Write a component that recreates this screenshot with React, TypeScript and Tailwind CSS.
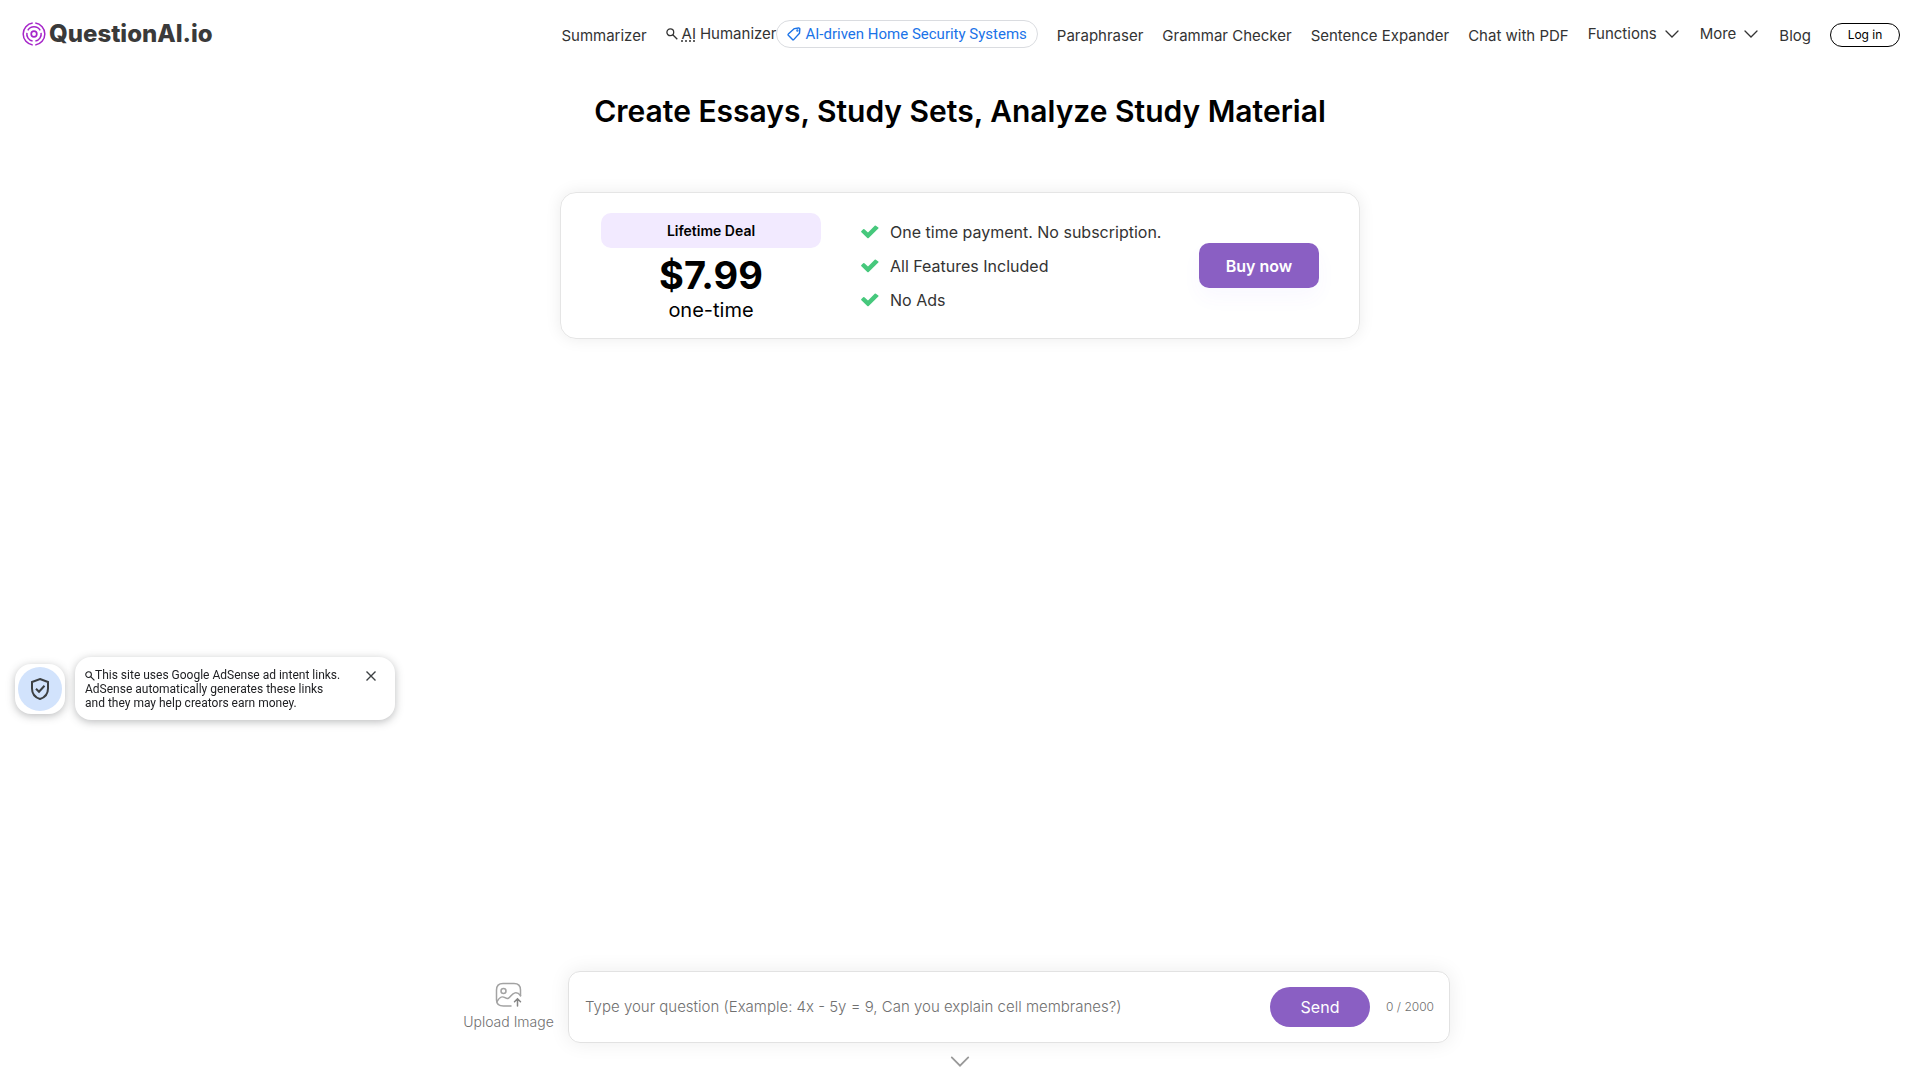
import { useState } from "react";

const perks = ["One time payment. No subscription.", "All Features Included", "No Ads"];

function LogoMark() {
  return (
    <svg width="24" height="24" viewBox="0 0 24 24" fill="none" stroke="#a626c9" strokeWidth="1.5" aria-hidden="true">
      <circle cx="12" cy="12" r="2.8" strokeWidth="1.7" />
      <path d="M5.8 8.4A7.200 7.200 0 0 1 18.200 8.400M4.900 10.800a7.200 7.200 0 0 0 5.700 8.300M19.100 10.800a7.200 7.200 0 0 1-5.700 8.300" />
      <path d="M10.7 1.100A11 11 0 0 0 10.700 22.900M13.300 1.100A11 11 0 0 1 13.300 22.900" />
    </svg>
  );
}

function SearchIcon({ size }: { size: number }) {
  return (
    <svg width={size} height={size} viewBox="0 0 12 12" fill="none" stroke="currentColor" strokeWidth="1.3" className="inline shrink-0" aria-hidden="true">
      <circle cx="4.3" cy="4.3" r="3.4" />
      <path d="m6.8 6.8 4.500 4.500" />
    </svg>
  );
}

function Chevron({ width }: { width: number }) {
  return (
    <svg width={width} height={width / 2 + 1} viewBox="0 0 14 8" fill="none" stroke="currentColor" strokeWidth="1.3" strokeLinecap="round" aria-hidden="true">
      <path d="m1 1 6 6 6-6" />
    </svg>
  );
}

function CloseIcon() {
  return (
    <svg width="12" height="12" viewBox="0 0 12 12" stroke="#3c4043" strokeWidth="1.4" aria-hidden="true">
      <path d="m1.5 1.5 9 9M10.500 1.500l-9 9" />
    </svg>
  );
}

function TagIcon() {
  return (
    <svg width="14" height="14" viewBox="0 0 14 14" fill="none" stroke="#1a73e8" strokeWidth="1.4" strokeLinejoin="round" aria-hidden="true">
      <path d="M7.4 1.6 11.6 1q1.2-.1 1.2 1.1l-.3 4.200L6.700 12.600q-.6.5-1.200 0L1.300 8.300q-.5-.6 0-1.200z" />
      <circle cx="10.4" cy="3.5" r=".5" />
    </svg>
  );
}

function CheckIcon() {
  return (
    <svg width="18" height="14" viewBox="0 0 18 14" fill="#46c87c" className="shrink-0" aria-hidden="true">
      <path d="M.4 6 2.200 4.200q.6-.6 1.200 0L7 7.400 13.700.8q.6-.6 1.200 0l2.400 1.600q.6.600 0 1.200L7.700 13q-.7.600-1.400 0L.4 7.200q-.6-.6 0-1.200z" />
    </svg>
  );
}

function UploadIcon() {
  return (
    <svg width="27" height="26" viewBox="0 0 27 26" fill="none" stroke="#a3a3a3" strokeWidth="1.5" strokeLinecap="round" aria-hidden="true">
      <path d="M16 24H8.500Q1.500 24 1.500 18V8Q1.500 1.500 8 1.500h11q6.500 0 6.500 6.500v6" />
      <circle cx="8.5" cy="9" r="2.5" />
      <path d="M2 19.500c3-5 5-5.500 8-3.800s4 .5 6-1.900 5.500-5.300 9.500-.3" />
      <path d="M22.500 24v-7M19.500 19.800l3-3 3 3" stroke="#858585" />
    </svg>
  );
}

function ShieldIcon() {
  return (
    <svg width="20" height="24" viewBox="0 0 20 24" fill="none" stroke="#3c4043" strokeWidth="2" aria-hidden="true">
      <path d="M10 2 18 5v6.500c0 5-3.300 9-8 10.500-4.700-1.500-8-5.500-8-10.500V5z" />
      <path d="m6 11.800 3 3 5.500-6" />
    </svg>
  );
}

function Header() {
  return (
    <header className="flex items-start justify-between pl-[22px] pr-5 h-[68px]">
      <a href="#" className="flex items-center gap-[3px] mt-[18px] text-[#3a3a3a]">
        <LogoMark />
        <span className="text-2xl font-extrabold">QuestionAI.io</span>
      </a>
      <nav className="flex items-start gap-[19px] pt-5 text-[15px] leading-7 text-[#333333] whitespace-nowrap">
        <a href="#" className="pt-[2px]">Summarizer</a>
        <span className="flex items-center">
          <a href="#" className="flex items-center gap-1">
            <SearchIcon size={12} />
            <span className="underline decoration-dotted underline-offset-2">AI</span>
            <span>Humanizer</span>
          </a>
          <a href="#" className="flex items-center gap-1 h-7 px-[10px] rounded-full border border-[#dadce0] text-[#1a73e8] font-['Roboto',sans-serif]">
            <TagIcon />
            AI-driven Home Security Systems
          </a>
        </span>
        <a href="#" className="pt-[2px]">Paraphraser</a>
        <a href="#" className="pt-[2px]">Grammar Checker</a>
        <a href="#" className="pt-[2px]">Sentence Expander</a>
        <a href="#" className="pt-[2px]">Chat with PDF</a>
        <button className="flex items-center gap-2 pr-[2px]">
          Functions <Chevron width={14} />
        </button>
        <button className="flex items-center gap-2 pr-[2px]">
          More <Chevron width={14} />
        </button>
        <a href="#" className="pt-[2px]">Blog</a>
        <button className="mt-[3px] w-[70px] h-6 rounded-full border border-black text-xs text-black">Log in</button>
      </nav>
    </header>
  );
}

function DealCard() {
  return (
    <section className="mt-[61px] w-full max-w-[800px] flex items-center gap-10 px-10 py-5 rounded-2xl border border-[#e5e5e5] shadow-[0_0_16px_rgba(0,0,0,0.08)]">
      <div className="w-[220px] shrink-0 -mb-1 text-center text-black">
        <div className="h-[35px] rounded-[10px] bg-[#f2eaff] text-sm leading-[35px] font-semibold">Lifetime Deal</div>
        <div className="mt-1 text-[38px] leading-[46px] font-bold">$7.99</div>
        <div className="text-xl leading-6">one-time</div>
      </div>
      <ul className="flex-1 min-w-0 flex flex-col gap-[10px] text-base text-[#333333] whitespace-nowrap">
        {perks.map((perk) => (
          <li key={perk} className="flex items-center gap-[11px]">
            <CheckIcon />
            {perk}
          </li>
        ))}
      </ul>
      <button className="w-[120px] h-[45px] shrink-0 rounded-[10px] bg-[#8a5fc3] text-white text-base font-semibold shadow-[0_10px_20px_rgba(100,80,255,0.04)]">
        Buy now
      </button>
    </section>
  );
}

function AdNotice({ onClose }: { onClose: () => void }) {
  return (
    <aside className="fixed left-[15px] bottom-[360px] flex items-center gap-[10px]">
      <button aria-label="Ad privacy" className="w-[50px] h-[50px] rounded-2xl bg-white flex items-center justify-center shadow-[0_2px_8px_rgba(60,64,67,0.35)]">
        <span className="w-11 h-11 rounded-full bg-[#d2e3fc] flex items-center justify-center">
          <ShieldIcon />
        </span>
      </button>
      <div className="w-80 flex items-start justify-between rounded-2xl bg-white pl-[10px] pr-[18px] pt-[11px] pb-[10px] shadow-[0_2px_8px_rgba(60,64,67,0.35)]">
        <p className="font-['Roboto',sans-serif] text-xs leading-[14px] text-[#202124] whitespace-nowrap">
          <SearchIcon size={10} />
          This site uses Google AdSense ad intent links.
          <br />
          AdSense automatically generates these links
          <br />
          and they may help creators earn money.
        </p>
        <button aria-label="Close" onClick={onClose} className="pt-[2px]">
          <CloseIcon />
        </button>
      </div>
    </aside>
  );
}

export default function App() {
  const [question, setQuestion] = useState("");
  const [showNotice, setShowNotice] = useState(true);

  return (
    <div className="min-h-screen flex flex-col bg-white font-['Inter',sans-serif]">
      <Header />
      <main className="flex-1 flex flex-col items-center">
        <h1 className="mt-[23px] text-[30px] leading-10 font-semibold text-black">Create Essays, Study Sets, Analyze Study Material</h1>
        <DealCard />
      </main>

      {showNotice && <AdNotice onClose={() => setShowNotice(false)} />}

      <footer className="flex flex-col items-center pb-[13px]">
        <form className="w-full max-w-[990px] flex items-center gap-4 pr-[5px]" onSubmit={(e) => e.preventDefault()}>
          <label className="w-[87px] flex flex-col items-center gap-1 text-sm font-light text-[#707070] whitespace-nowrap cursor-pointer">
            <UploadIcon />
            Upload Image
            <input type="file" className="hidden" />
          </label>
          <div className="flex-1 h-[72px] flex items-center pl-4 pr-[15px] rounded-xl border border-[#e2e2e2] shadow-[0_0_20px_rgba(0,0,0,0.08)]">
            <input
              aria-label="Question"
              className="flex-1 text-[15px] font-light outline-none placeholder:text-[#707070]"
              placeholder="Type your question (Example: 4x - 5y = 9, Can you explain cell membranes?)"
              maxLength={2000}
              value={question}
              onChange={(e) => setQuestion(e.target.value)}
            />
            <button className="w-[100px] h-10 rounded-full bg-[#8a5fc3] text-white text-base">Send</button>
            <span className="w-16 text-right text-xs font-light text-[#707070]">{question.length} / 2000</span>
          </div>
        </form>
        <button aria-label="Scroll down" className="mt-[13px] text-[#999999]">
          <Chevron width={20} />
        </button>
      </footer>
    </div>
  );
}
